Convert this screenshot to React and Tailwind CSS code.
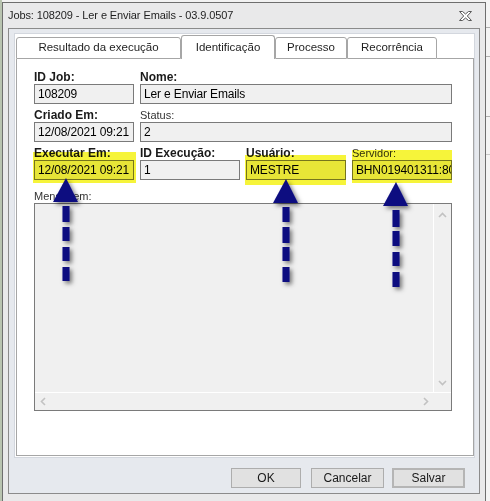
import React from 'react';

// Campo de texto somente leitura, estilo WinForms
const TextBox = ({ value, className = '' }) => (
    <div className={`h-[20px] border border-[#7a7a7a] bg-[#f0f0f0] px-[3px] text-[12px] tracking-[-0.15px] leading-[18px] text-black overflow-hidden whitespace-nowrap ${className}`}>
        {value}
    </div>
);

const Label = ({ children, bold }) => (
    <div className={`h-[18px] flex items-end leading-[14px] whitespace-nowrap ${bold ? 'text-[12px] font-bold text-[#1a1a1a]' : 'text-[11px] text-[#333]'}`}>
        {children}
    </div>
);

// Marca-texto amarelo por cima do campo
const Marker = ({ className }) => (
    <div className={`absolute bg-[#f6f43a] mix-blend-multiply pointer-events-none ${className}`} />
);

const Field = ({ label, value, bold, className = '', marker }) => (
    <div className={`relative ${className}`}>
        <Label bold={bold}>{label}</Label>
        <TextBox value={value} />
        {marker && <Marker className={marker} />}
    </div>
);

const Chevron = ({ d }) => (
    <svg width="9" height="6" viewBox="0 0 9 6">
        <path d={d} fill="none" stroke="#c2c2c2" strokeWidth="1.6" />
    </svg>
);

const tabs = [
    { name: 'Resultado da execução', w: 'w-[165px]' },
    { name: 'Identificação', w: 'w-[94px]', active: true },
    { name: 'Processo', w: 'w-[72px]' },
    { name: 'Recorrência', w: 'w-[90px]' },
];

const Arrow = ({ x, tip, dashes }) => (
    <g>
        <polygon points={`${x},${tip} ${x - 13},${tip + 24} ${x + 12},${tip + 24}`} />
        {dashes.map(([y1, y2]) => (
            <rect key={y1} x={x - 3.5} y={y1} width="7" height={y2 - y1} />
        ))}
    </g>
);

export default function App() {
    return (
        <div className="relative w-[490px] h-[501px] flex bg-[#f2f2f2] overflow-hidden font-['Liberation_Sans',Arial,sans-serif]">
            <div className="w-[2px] bg-[#b9c4b0]" />

            <div className="w-[484px] mt-[2px] border border-[#6e6e6e] border-b-0 bg-[#e9e9ea] flex flex-col">
                <div className="h-[25px] shrink-0 flex items-center justify-between pl-[5px] pr-[13px]">
                    <span className="text-[11px] tracking-[-0.1px] text-[#1e1e1e]">Jobs: 108209 - Ler e Enviar Emails - 03.9.0507</span>
                    <svg width="13" height="10" viewBox="0 0 13 10">
                        <polygon
                            points="0.5,0.5 3.5,0.5 6.5,3 9.5,0.5 12.5,0.5 8.3,5 12.5,9.5 9.5,9.5 6.5,7 3.5,9.5 0.5,9.5 4.7,5"
                            fill="#ffffff"
                            stroke="#5a5a5a"
                            strokeWidth="1"
                            strokeLinejoin="round"
                        />
                    </svg>
                </div>

                <div className="px-[5px]">
                    <div className="border border-[#8b8b8b] bg-[#e6e9ee] pt-[4px] pl-[5px] pr-[4px] pb-[5px]">
                        <div className="border border-[#d3d7de] bg-white pt-px pl-px pb-px">
                            <div className="flex items-end h-[24px]">
                                {tabs.map((t) =>
                                    t.active ? (
                                        <div key={t.name} className={`${t.w} h-[24px] border border-b-0 border-[#a6a6a6] rounded-t-[3px] bg-white flex items-center justify-center text-[11.5px] text-[#1f1f1f] pt-[1px]`}>
                                            {t.name}
                                        </div>
                                    ) : (
                                        <div key={t.name} className={`${t.w} h-[22px] border border-[#a6a6a6] rounded-t-[3px] bg-white flex items-center justify-center text-[11.5px] text-[#1f1f1f]`}>
                                            {t.name}
                                        </div>
                                    )
                                )}
                                <div className="flex-1 border-b border-[#a6a6a6]" />
                            </div>

                            <div className="border border-t-0 border-[#a6a6a6] pt-[7px] pl-[17px] pb-[44px]">
                                <div className="grid grid-cols-[100px_100px_100px_100px] gap-x-[6px]">
                                    <Field label="ID Job:" value="108209" bold />
                                    <Field label="Nome:" value="Ler e Enviar Emails" bold className="col-span-3" />
                                    <Field label="Criado Em:" value="12/08/2021 09:21" bold />
                                    <Field label="Status:" value="2" className="col-span-3" />
                                    <Field label="Executar Em:" value="12/08/2021 09:21" bold marker="-left-px -right-[2px] top-[10px] -bottom-[3px]" />
                                    <Field label="ID Execução:" value="1" bold />
                                    <Field label="Usuário:" value="MESTRE" bold marker="-left-px right-0 top-[13px] -bottom-[5px]" />
                                    <Field label="Servidor:" value="BHN019401311:8095" marker="left-0 right-0 top-[8px] -bottom-[3px]" />

                                    <div className="col-span-4">
                                        <div className="h-[23px] flex items-end leading-[14px] text-[11px] text-[#333]">Mensagem:</div>
                                        <div className="h-[208px] border border-[#7a7a7a] bg-[#f0f0f0] flex flex-col">
                                            <div className="flex-1 flex">
                                                <div className="flex-1" />
                                                <div className="w-[18px] border-l border-white flex flex-col items-center justify-between pt-[8px] pb-[6px]">
                                                    <Chevron d="M1 5 L4.5 1.5 L8 5" />
                                                    <Chevron d="M1 1 L4.5 4.5 L8 1" />
                                                </div>
                                            </div>
                                            <div className="h-[18px] border-t border-white flex">
                                                <div className="flex-1 flex items-center justify-between pl-[5px] pr-[4px]">
                                                    <svg width="6" height="9" viewBox="0 0 6 9"><path d="M5 1 L1.5 4.5 L5 8" fill="none" stroke="#c2c2c2" strokeWidth="1.6" /></svg>
                                                    <svg width="6" height="9" viewBox="0 0 6 9"><path d="M1 1 L4.5 4.5 L1 8" fill="none" stroke="#c2c2c2" strokeWidth="1.6" /></svg>
                                                </div>
                                                <div className="w-[18px]" />
                                            </div>
                                        </div>
                                    </div>
                                </div>
                            </div>
                        </div>

                        <div className="flex justify-end gap-[10px] mt-[10px] pr-[10px]">
                            <button className="w-[70px] h-[20px] border border-[#adadad] bg-[#e1e1e1] text-[12px] text-[#1a1a1a] leading-none">OK</button>
                            <div className="flex gap-[8px]">
                                <button className="w-[73px] h-[20px] border border-[#adadad] bg-[#e1e1e1] text-[12px] text-[#1a1a1a] leading-none">Cancelar</button>
                                <button className="w-[73px] h-[20px] border-2 border-[#b5b5b5] bg-[#e1e1e1] text-[12px] text-[#1a1a1a] leading-none">Salvar</button>
                            </div>
                        </div>
                    </div>
                </div>
            </div>

            <div className="w-[4px] bg-[#f4f4f4] flex flex-col">
                <div className="h-[28px] border-b border-[#b0b0b0]" />
                <div className="h-[29px] border-b border-[#b0b0b0]" />
                <div className="h-[60px] border-b border-[#b0b0b0]" />
                <div className="h-[38px] border-b border-[#c8c8c8]" />
            </div>

            {/* setas de destaque sobre os campos */}
            <svg className="absolute inset-0 pointer-events-none" width="490" height="501" viewBox="0 0 490 501">
                <defs>
                    <filter id="sombra" x="-50%" y="-20%" width="200%" height="140%">
                        <feDropShadow dx="2.5" dy="2.5" stdDeviation="2" floodColor="#000" floodOpacity="0.5" />
                    </filter>
                </defs>
                <g fill="#0c0c80" filter="url(#sombra)">
                    <Arrow x={66} tip={178} dashes={[[206, 222], [227, 241], [247, 261], [267, 281]]} />
                    <Arrow x={286} tip={179} dashes={[[207, 222], [227, 243], [247, 261], [267, 282]]} />
                    <Arrow x={396} tip={182} dashes={[[210, 227], [231, 246], [252, 266], [272, 287]]} />
                </g>
            </svg>
        </div>
    );
}
